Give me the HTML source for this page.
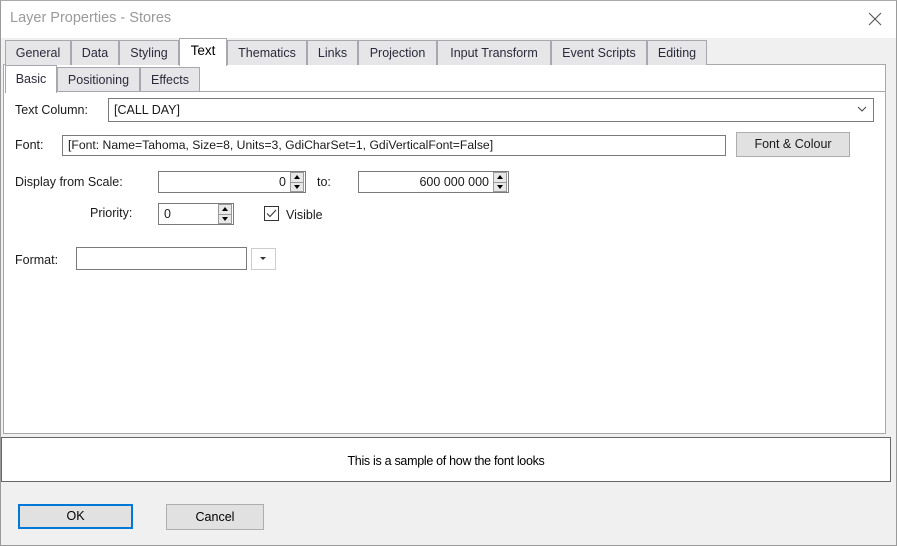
<!DOCTYPE html>
<html><head><style>
*{box-sizing:border-box;margin:0;padding:0}
body{width:897px;height:546px;overflow:hidden;background:#f0f0f0;font-family:"Liberation Sans","DejaVu Sans",sans-serif;font-size:12.5px;color:#1a1a1a;position:relative}
.a{position:absolute}
.win{left:0;top:0;width:897px;height:546px;border:1px solid #9a9a9a;border-top:1px solid #aaa}
.title{left:1px;top:1px;width:895px;height:37px;background:#fff}
.tab{position:absolute;top:40px;height:25px;background:#e6e6e9;border:1px solid #a7a7ad;border-bottom:none;text-align:center;line-height:24px;color:#2a2a3a}
.tab.act{top:38px;height:28px;background:#fff;color:#000}
.sub{position:absolute;top:67px;height:25px;background:#e6e6e9;border:1px solid #a7a7ad;text-align:center;line-height:24px;color:#2a2a3a}
.sub.act{top:65px;height:28px;background:#fff;border-bottom:none;line-height:26px}
.box{position:absolute;background:#fff;border:1px solid #7a7a7a;height:23px;line-height:21px;padding:0 5px}
.spin{position:absolute;width:14px;height:20px;border:1px solid #999;background:#e8e8e8}
.spin:before{content:"";position:absolute;left:3px;top:2px;border-left:3.5px solid transparent;border-right:3.5px solid transparent;border-bottom:4px solid #000}
.spin:after{content:"";position:absolute;left:3px;top:12px;border-left:3.5px solid transparent;border-right:3.5px solid transparent;border-top:4px solid #000}
.spin i{position:absolute;left:0;top:9px;width:12px;height:1px;background:#999}
.btn{position:absolute;background:#e1e1e1;border:1px solid #adadad;text-align:center}
</style></head><body>
<div class="a win"></div>
<div class="a title"></div>
<div class="a" style="left:10px;top:10px;font-size:14.5px;color:#9a9a9a">Layer Properties - Stores</div>
<svg class="a" style="left:868px;top:12px" width="14" height="14"><path d="M1 1L13 13M13 1L1 13" stroke="#555" stroke-width="1.1"/></svg>

<div class="a" style="left:3px;top:64px;width:883px;height:370px;background:#fff;border:1px solid #a7a7ad"></div>
<div class="a" style="left:5px;top:91px;width:880px;height:342px;border-top:1px solid #a7a7ad"></div>

<div class="tab" style="left:5px;width:66px">General</div>
<div class="tab" style="left:71px;width:48px">Data</div>
<div class="tab" style="left:119px;width:60px">Styling</div>
<div class="tab" style="left:227px;width:80px">Thematics</div>
<div class="tab" style="left:307px;width:51px">Links</div>
<div class="tab" style="left:358px;width:79px">Projection</div>
<div class="tab" style="left:437px;width:114px">Input Transform</div>
<div class="tab" style="left:551px;width:96px">Event Scripts</div>
<div class="tab" style="left:647px;width:60px">Editing</div>
<div class="tab act" style="left:179px;width:48px;font-size:13.5px">Text</div>

<div class="sub" style="left:57px;width:83px">Positioning</div>
<div class="sub" style="left:140px;width:60px">Effects</div>
<div class="sub act" style="left:5px;width:52px">Basic</div>

<div class="a" style="left:15px;top:103px">Text Column:</div>
<div class="box" style="left:108px;top:98px;width:766px;height:24px;line-height:22px">[CALL DAY]</div>
<svg class="a" style="left:857px;top:106px" width="10" height="6"><path d="M1 1L5 5L9 1" stroke="#444" fill="none"/></svg>

<div class="a" style="left:15px;top:138px">Font:</div>
<div class="box" style="left:62px;top:135px;width:664px;height:21px;line-height:19px;font-size:12.2px">[Font: Name=Tahoma, Size=8, Units=3, GdiCharSet=1, GdiVerticalFont=False]</div>
<div class="btn" style="left:736px;top:132px;width:114px;height:25px;line-height:23px">Font &amp; Colour</div>

<div class="a" style="left:15px;top:175px">Display from Scale:</div>
<div class="box" style="left:158px;top:171px;width:148px;height:22px;text-align:right;padding-right:19px">0</div>
<div class="spin" style="left:290px;top:172px"><i></i></div>
<div class="a" style="left:317px;top:175px">to:</div>
<div class="box" style="left:358px;top:171px;width:151px;height:22px;text-align:right;padding-right:19px">600 000 000</div>
<div class="spin" style="left:493px;top:172px"><i></i></div>

<div class="a" style="left:90px;top:206px">Priority:</div>
<div class="box" style="left:158px;top:203px;width:76px;height:22px">0</div>
<div class="spin" style="left:218px;top:204px"><i></i></div>
<div class="a" style="left:264px;top:206px;width:15px;height:15px;border:1px solid #333;background:#fff"></div>
<svg class="a" style="left:266px;top:209px" width="11" height="9"><path d="M1 4.5L4 7.5L10 1" stroke="#333" fill="none" stroke-width="1.1"/></svg>
<div class="a" style="left:286px;top:208px">Visible</div>

<div class="a" style="left:15px;top:253px">Format:</div>
<div class="box" style="left:76px;top:247px;width:171px;height:23px"></div>
<div class="a" style="left:251px;top:248px;width:25px;height:22px;border:1px solid #ccc;background:#fff"></div>
<div class="a" style="left:260px;top:257px;border-left:3px solid transparent;border-right:3px solid transparent;border-top:3px solid #333"></div>

<div class="a" style="left:1px;top:437px;width:890px;height:45px;background:#fff;border:1px solid #666"></div>
<div class="a" style="left:1px;top:454px;width:890px;text-align:center;font-size:12.5px;color:#000;letter-spacing:-0.3px">This is a sample of how the font looks</div>

<div class="btn" style="left:18px;top:504px;width:115px;height:25px;border:2px solid #0078d7;line-height:21px;color:#000">OK</div>
<div class="btn" style="left:166px;top:504px;width:98px;height:26px;line-height:24px;color:#000">Cancel</div>
</body></html>
